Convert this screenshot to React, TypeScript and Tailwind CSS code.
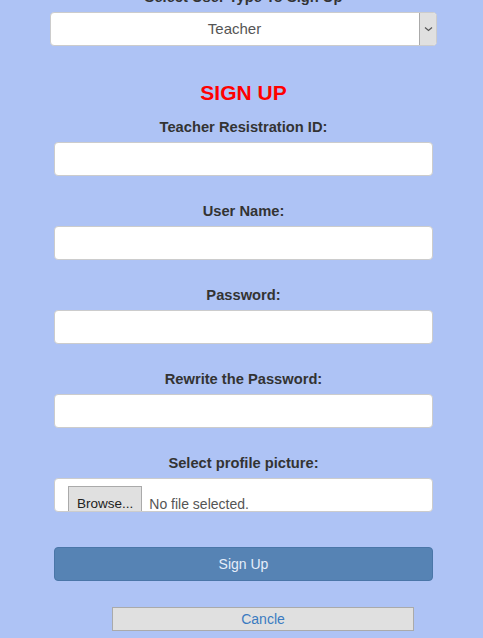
import { useState } from "react";

const fields = [
  "Teacher Resistration ID:",
  "User Name:",
  "Password:",
  "Rewrite the Password:",
];

export default function App() {
  const [userType, setUserType] = useState("Teacher");

  return (
    <div className="min-h-screen w-full overflow-hidden bg-[#aec3f5] font-['Liberation_Sans',Arial,sans-serif] text-[#333]">
      <div className="ml-[54px] w-[379px]">
        {/* user type select */}
        <p className="-mt-[12px] h-[18px] text-center text-[14.7px] font-bold leading-[18px]">
          Select User Type To Sign Up
        </p>
        <div className="relative -mx-[4px] mt-[6px] h-[34px] w-[387px]">
          <select
            value={userType}
            onChange={(e) => setUserType(e.target.value)}
            className="h-full w-full appearance-none rounded-[4px] border border-[#ccc] bg-white pr-[18px] text-center text-[15px] text-[#555] outline-none"
          >
            <option>Teacher</option>
            <option>Student</option>
          </select>
          <span className="pointer-events-none absolute right-[1px] top-[1px] flex h-[32px] w-[17px] items-center justify-center rounded-r-[3px] border-l border-[#aaa] bg-[#e0e0e0]">
            <svg width="9" height="6" viewBox="0 0 9 6" fill="none">
              <path d="M1 1.5 L4.5 4.5 L8 1.5" stroke="#555" strokeWidth="1.2" />
            </svg>
          </span>
        </div>

        <h1 className="mt-[32px] text-center text-[21px] font-bold leading-[30px] text-[#ff0000]">
          SIGN UP
        </h1>

        {/* text fields */}
        <div className="mt-[10px] flex flex-col gap-[26px]">
          {fields.map((label, i) => (
            <div key={label} className="flex flex-col">
              <label className="text-center text-[14.7px] font-bold leading-[18px]">
                {label}
              </label>
              <input
                type={i >= 2 ? "password" : "text"}
                className="mt-[6px] h-[34px] w-full rounded-[4px] border border-[#ccc] bg-white px-3 text-[14px] outline-none"
              />
            </div>
          ))}

          {/* profile picture */}
          <div className="flex flex-col">
            <label className="text-center text-[14.7px] font-bold leading-[18px]">
              Select profile picture:
            </label>
            <div className="mt-[6px] flex h-[34px] items-start overflow-hidden rounded-[4px] border border-[#ccc] bg-white pl-[13px] pt-[7px]">
              <span className="h-[32px] shrink-0 border border-[#aaa] bg-[#e0e0e0] px-[8px] pt-[9px] text-[13.5px] leading-[16px] text-[#222]">
                Browse...
              </span>
              <span className="ml-[7px] pt-[10px] text-[14px] leading-[16px] text-[#555]">
                No file selected.
              </span>
            </div>
          </div>
        </div>

        <button className="mt-[35px] h-[34px] w-full rounded-[4px] border border-[#4a76a8] bg-[#5683b4] text-[14px] text-[#e6eefa]">
          Sign Up
        </button>

        <div className="mt-[26px] flex pl-[58px]">
          <button className="h-[24px] w-[302px] border border-[#aaa] bg-[#e0e0e0] text-[14px] leading-[22px] text-[#3a7bc0]">
            Cancle
          </button>
        </div>
      </div>
    </div>
  );
}
